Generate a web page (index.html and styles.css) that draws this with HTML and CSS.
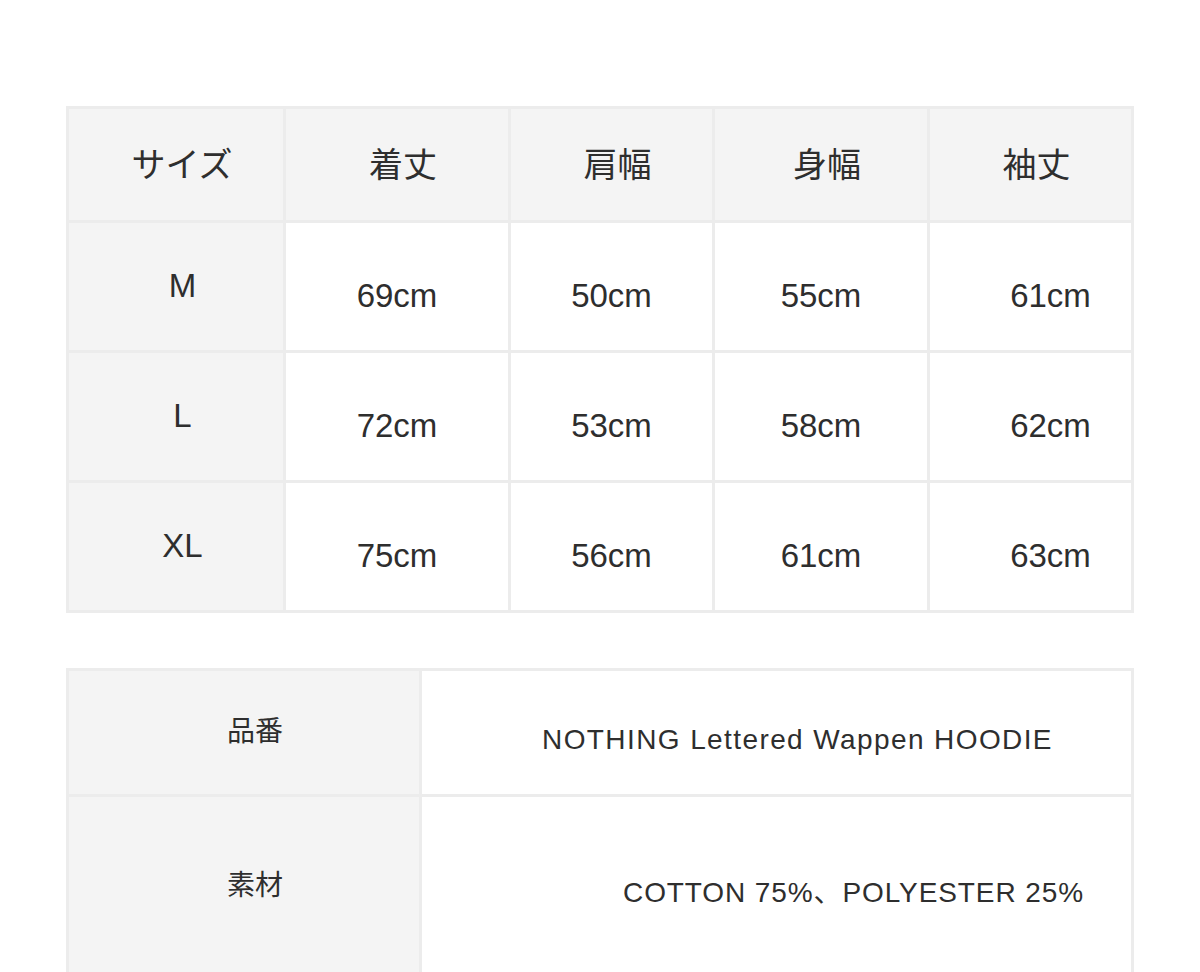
FILE: index.html
```html
<!DOCTYPE html>
<html lang="ja">
<head>
<meta charset="utf-8">
<title>サイズ表</title>
<link rel="stylesheet" href="styles.css">
</head>
<body>
<main class="page">
  <table class="size-table">
    <colgroup>
      <col class="c1"><col class="c2"><col class="c3"><col class="c4"><col class="c5">
    </colgroup>
    <thead>
      <tr>
        <th>サイズ</th><th>着丈</th><th>肩幅</th><th>身幅</th><th>袖丈</th>
      </tr>
    </thead>
    <tbody>
      <tr>
        <th class="size">M</th><td>69cm</td><td>50cm</td><td>55cm</td><td class="last">61cm</td>
      </tr>
      <tr>
        <th class="size">L</th><td>72cm</td><td>53cm</td><td>58cm</td><td class="last">62cm</td>
      </tr>
      <tr>
        <th class="size">XL</th><td>75cm</td><td>56cm</td><td>61cm</td><td class="last">63cm</td>
      </tr>
    </tbody>
  </table>

  <table class="info-table">
    <colgroup>
      <col class="i1"><col class="i2">
    </colgroup>
    <tbody>
      <tr class="row-name">
        <th>品番</th>
        <td>NOTHING Lettered Wappen HOODIE</td>
      </tr>
      <tr class="row-material">
        <th>素材</th>
        <td>COTTON 75%、POLYESTER 25%</td>
      </tr>
    </tbody>
  </table>
</main>
</body>
</html>
```

FILE: styles.css
```css
html, body {
  margin: 0;
  padding: 0;
  background: #ffffff;
}

body {
  font-family: "Liberation Sans", "Noto Sans CJK JP", sans-serif;
  color: #2e2e2e;
}

.page {
  padding: 106px 0 0 66px;
  display: flex;
  flex-direction: column;
  gap: 55px;
  align-items: flex-start;
}

table {
  border-collapse: collapse;
  table-layout: fixed;
}

th, td {
  border: 3px solid #ececec;
  padding: 0;
  text-align: center;
  vertical-align: middle;
  font-weight: normal;
}

/* size table */
.size-table {
  width: 1065px;
}
.size-table .c1 { width: 217px; }
.size-table .c2 { width: 225px; }
.size-table .c3 { width: 204px; }
.size-table .c4 { width: 215px; }
.size-table .c5 { width: 204px; }

.size-table thead tr {
  height: 114px;
}

.size-table thead th {
  background: #f4f4f4;
  font-family: "Noto Sans CJK JP", sans-serif;
  font-size: 34px;
  padding: 0 0 4px 12px;
  line-height: 1;
}

.size-table tbody tr {
  height: 130px;
}

.size-table .size {
  background: #f4f4f4;
  font-size: 33px;
  padding-left: 13px;
  padding-bottom: 2px;
}

.size-table td {
  font-size: 33px;
  padding-top: 18px;
}

.size-table td.last {
  padding-left: 40px;
}

/* info table */
.info-table {
  width: 1065px;
}
.info-table .i1 { width: 353px; }
.info-table .i2 { width: 712px; }

.info-table th {
  background: #f4f4f4;
  font-family: "Noto Sans CJK JP", sans-serif;
  font-size: 28px;
  padding-left: 22px;
}

.info-table td {
  font-size: 28px;
}

.row-name { height: 126px; }
.row-name th { padding-bottom: 8px; }
.row-name td { padding: 14px 0 0 42px; letter-spacing: 1.4px; }

.row-material { height: 178px; }
.row-material td { padding: 10px 0 0 154px; letter-spacing: 0.9px; }
.row-material th { padding-bottom: 4px; }
```
